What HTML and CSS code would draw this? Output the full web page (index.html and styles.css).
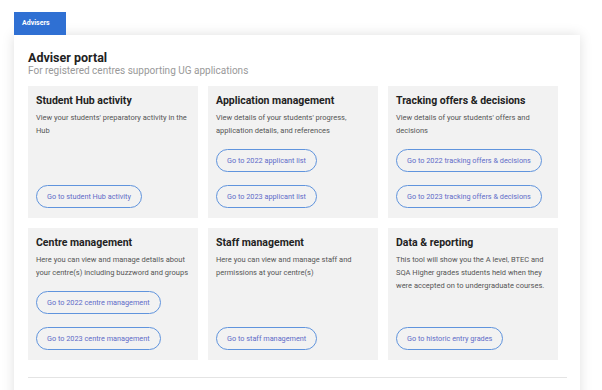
FILE: index.html
```html
<!DOCTYPE html>
<html lang="en">
<head>
<meta charset="utf-8">
<title>Adviser portal</title>
<link rel="stylesheet" href="styles.css">
</head>
<body>
<div class="page">
  <div class="tab">Advisers</div>
  <div class="panel">
    <h1 class="title">Adviser portal</h1>
    <p class="subtitle">For registered centres supporting UG applications</p>
    <div class="grid">
      <div class="tile">
        <h2 class="tile-head">Student Hub activity</h2>
        <p class="tile-desc">View your students' preparatory activity in the Hub</p>
        <div class="actions">
          <a class="btn">Go to student Hub activity</a>
        </div>
      </div>
      <div class="tile">
        <h2 class="tile-head">Application management</h2>
        <p class="tile-desc">View details of your students' progress, application details, and references</p>
        <div class="actions">
          <a class="btn">Go to 2022 applicant list</a>
          <a class="btn">Go to 2023 applicant list</a>
        </div>
      </div>
      <div class="tile">
        <h2 class="tile-head">Tracking offers &amp; decisions</h2>
        <p class="tile-desc">View details of your students' offers and decisions</p>
        <div class="actions">
          <a class="btn">Go to 2022 tracking offers &amp; decisions</a>
          <a class="btn">Go to 2023 tracking offers &amp; decisions</a>
        </div>
      </div>
      <div class="tile">
        <h2 class="tile-head">Centre management</h2>
        <p class="tile-desc">Here you can view and manage details about your centre(s) including buzzword and groups</p>
        <div class="actions">
          <a class="btn">Go to 2022 centre management</a>
          <a class="btn">Go to 2023 centre management</a>
        </div>
      </div>
      <div class="tile">
        <h2 class="tile-head">Staff management</h2>
        <p class="tile-desc">Here you can view and manage staff and permissions at your centre(s)</p>
        <div class="actions">
          <a class="btn">Go to staff management</a>
        </div>
      </div>
      <div class="tile">
        <h2 class="tile-head">Data &amp; reporting</h2>
        <p class="tile-desc">This tool will show you the A level, BTEC and SQA Higher grades students held when they were accepted on to undergraduate courses.</p>
        <div class="actions">
          <a class="btn">Go to historic entry grades</a>
        </div>
      </div>
    </div>
    <div class="divider"></div>
  </div>
</div>
</body>
</html>
```
FILE: styles.css
```css
html, body {
  margin: 0;
  padding: 0;
  background: #ffffff;
}
body {
  font-family: Roboto, "Liberation Sans", Arial, sans-serif;
  color: #222;
}
.page {
  padding: 12px 22px 0 14px;
}
.tab {
  position: relative;
  z-index: 1;
  width: 52px;
  height: 23px;
  box-sizing: border-box;
  padding-left: 8px;
  background: #2f70d3;
  color: #fff;
  font-size: 7px;
  font-weight: 700;
  line-height: 23px;
}
.panel {
  width: 566px;
  box-sizing: border-box;
  background: #fff;
  box-shadow: 0 0 12px rgba(0, 0, 0, 0.13);
  padding: 15px 13px 30px 14px;
}
.title {
  margin: 0;
  font-size: 12.5px;
  font-weight: 700;
  line-height: 15px;
  color: #222;
}
.subtitle {
  margin: 0;
  font-size: 10px;
  line-height: 11px;
  color: #999;
}
.grid {
  margin-top: 10px;
  display: grid;
  grid-template-columns: repeat(3, 170px);
  gap: 10px;
}
.tile {
  background: #f2f2f2;
  padding: 9px 8px 10px 8px;
  display: flex;
  flex-direction: column;
}
.tile-head {
  margin: 0;
  font-size: 10.5px;
  font-weight: 700;
  line-height: 12px;
  color: #222;
}
.tile-desc {
  margin: 4px 0 0 0;
  font-size: 7.5px;
  line-height: 13px;
  color: #555;
}
.actions {
  margin-top: auto;
  padding-top: 12px;
  display: flex;
  flex-direction: column;
  align-items: flex-start;
  gap: 13px;
}
.btn {
  display: inline-flex;
  align-items: center;
  height: 23px;
  box-sizing: border-box;
  padding: 0 10px;
  border: 1.5px solid #6094dd;
  border-radius: 12px;
  font-size: 7.3px;
  color: #5f6cc8;
  white-space: nowrap;
}
.divider {
  margin-top: 17px;
  border-top: 1px solid #e4e4e4;
}
```
